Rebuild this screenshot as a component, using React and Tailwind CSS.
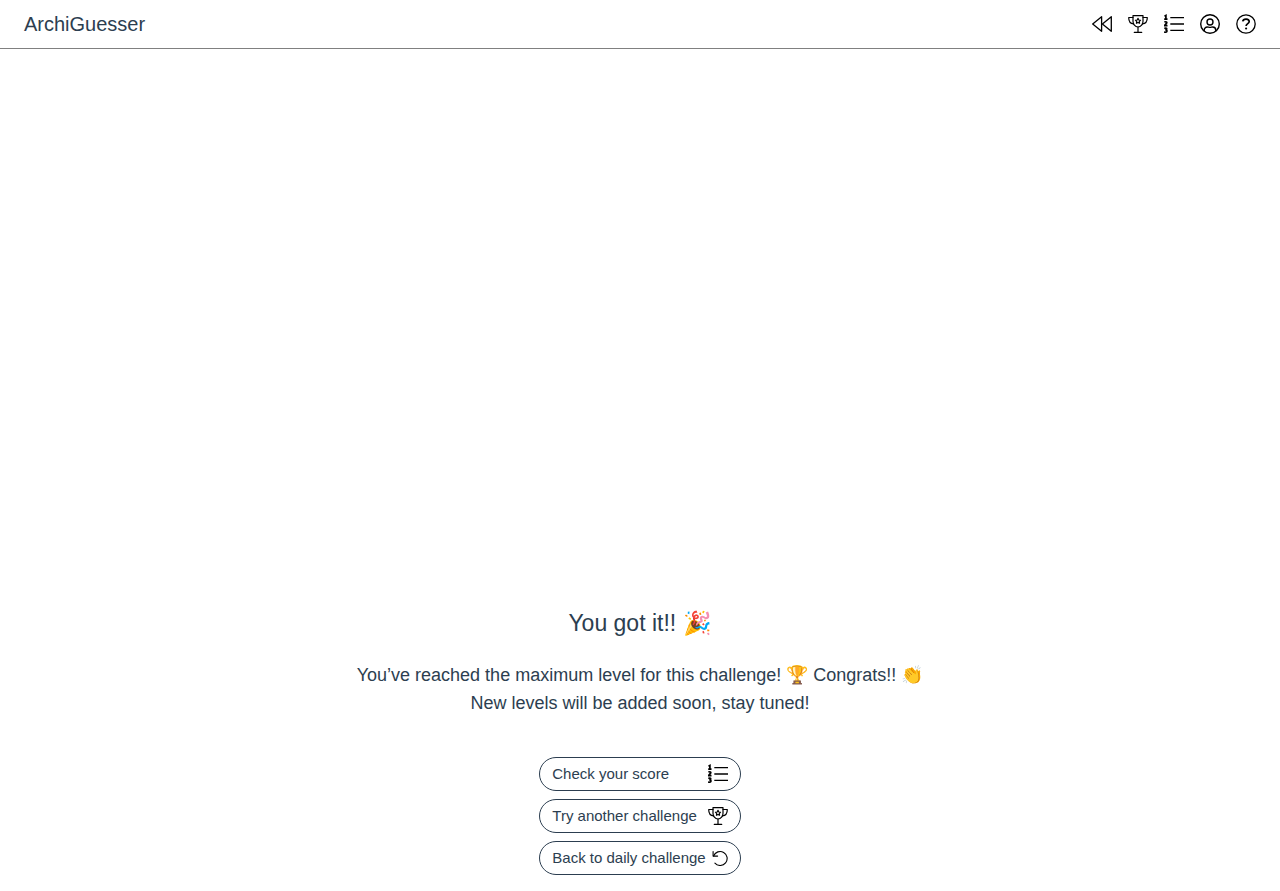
import React from "react";

function RewindIcon() {
  return (
    <svg viewBox="0 0 20 20" className="size-5" fill="none" stroke="currentColor" strokeWidth="1.3" strokeLinejoin="round" aria-hidden="true">
      <path d="M9.600 2.700v14.600L.7 10Z" />
      <path d="M19.300 2.700v14.600L10.400 10Z" />
    </svg>
  );
}

function TrophyIcon() {
  return (
    <svg viewBox="0 0 20 20" className="size-5" fill="none" stroke="currentColor" strokeWidth="1.2" strokeLinejoin="round" strokeLinecap="round" aria-hidden="true">
      <path d="M5 1.600h10v5.600c0 3-2 5.800-5 5.800S5 10.200 5 7.200Z" />
      <path d="M5 3.500H.7c0 3.700 1.300 6.200 4.900 6.400M15 3.500h4.300c0 3.700-1.300 6.200-4.900 6.400" />
      <path d="M10 13v5.400M6.300 18.400h7.400" />
      <path strokeWidth="1.100" d="m10 4.300.8 1.700 1.800.2-1.300 1.300.3 1.800-1.600-.9-1.600.9.3-1.800-1.300-1.300 1.800-.2Z" />
    </svg>
  );
}

function RankingIcon() {
  return (
    <svg viewBox="0 0 20 20" className="size-5" fill="none" stroke="currentColor" strokeWidth="1.3" aria-hidden="true">
      <path d="M6.300 3.700H20M6.300 10H20M6.300 16.300H20" />
      <g strokeWidth="1.700">
        <path d="M.5 2.300 1.900 1.500V5M.2 5.200h3.300" />
        <path d="M.4 8.300c.6-.8 2.500-.7 2.400.4C2.700 9.700.9 10.600.6 11.700h2.900" />
        <path d="M.3 14.600c.8-.8 2.500-.5 2.500.4 0 .7-.7.9-1.500.9 1 0 1.700.4 1.700 1.200 0 1.200-1.900 1.500-2.800.6" />
      </g>
    </svg>
  );
}

function AccountIcon() {
  return (
    <svg viewBox="0 0 20 20" className="size-5" fill="none" stroke="currentColor" strokeWidth="1.400" aria-hidden="true">
      <circle cx="10" cy="10" r="9.300" />
      <circle cx="10" cy="8" r="3" />
      <path d="M4.200 17.200v-1c0-1.800 1.300-3.200 3.100-3.200.9 0 1.500.4 2.700.4s1.800-.4 2.700-.4c1.800 0 3.100 1.400 3.100 3.200v1" />
    </svg>
  );
}

function HelpIcon() {
  return (
    <svg viewBox="0 0 20 20" className="size-5" fill="none" stroke="currentColor" strokeWidth="1.300" aria-hidden="true">
      <circle cx="10" cy="10" r="9.200" />
      <path strokeWidth="1.700" d="M6.700 7.300c.6-3.100 6.500-2.900 6.500.3 0 2.100-3.100 2.100-3.100 4.500" />
      <circle cx="10.100" cy="14.500" r="1.100" fill="currentColor" stroke="none" />
    </svg>
  );
}

function RestartIcon() {
  return (
    <svg viewBox="0 0 16 16" className="size-4" fill="none" stroke="currentColor" strokeWidth="1.100" strokeLinecap="round" strokeLinejoin="round" aria-hidden="true">
      <path d="M1.600 6A7 7 0 1 1 2.900 13.100" />
      <path d="M1.100 1.500v4.600h4.500" />
    </svg>
  );
}

const navigation = [
  { label: "Previous challenges", Icon: RewindIcon },
  { label: "Challenges", Icon: TrophyIcon },
  { label: "Ranking", Icon: RankingIcon },
  { label: "Account", Icon: AccountIcon },
  { label: "Help", Icon: HelpIcon },
];

const actions = [
  { label: "Check your score", Icon: RankingIcon },
  { label: "Try another challenge", Icon: TrophyIcon },
  { label: "Back to daily challenge", Icon: RestartIcon },
];

export default function App() {
  return (
    <div className="flex min-h-screen flex-col bg-white font-['Liberation_Sans',sans-serif] text-[#2c3e50]">
      <header className="flex items-center justify-between border-b border-[#808080] px-6 py-2">
        <a href="#" className="text-xl leading-8">ArchiGuesser</a>
        <nav className="flex items-center gap-4 text-black">
          {navigation.map(({ label, Icon }) => (
            <button key={label} type="button" aria-label={label}>
              <Icon />
            </button>
          ))}
        </nav>
      </header>

      <main className="flex grow flex-col items-center justify-end px-4 pb-4 text-center">
        <h1 className="text-[23px] leading-7">You got it!! 🎉</h1>
        <p className="mt-6 text-lg leading-7">
          You’ve reached the maximum level for this challenge! 🏆 Congrats!! 👏
          <br />
          New levels will be added soon, stay tuned!
        </p>
        <div className="mt-10 flex flex-col gap-2">
          {actions.map(({ label, Icon }) => (
            <button
              key={label}
              type="button"
              className="flex items-center justify-between gap-1.5 rounded-full border border-[#2c3e50] px-3 py-1 text-[15px] leading-6"
            >
              {label}
              <span className="text-black">
                <Icon />
              </span>
            </button>
          ))}
        </div>
      </main>
    </div>
  );
}
